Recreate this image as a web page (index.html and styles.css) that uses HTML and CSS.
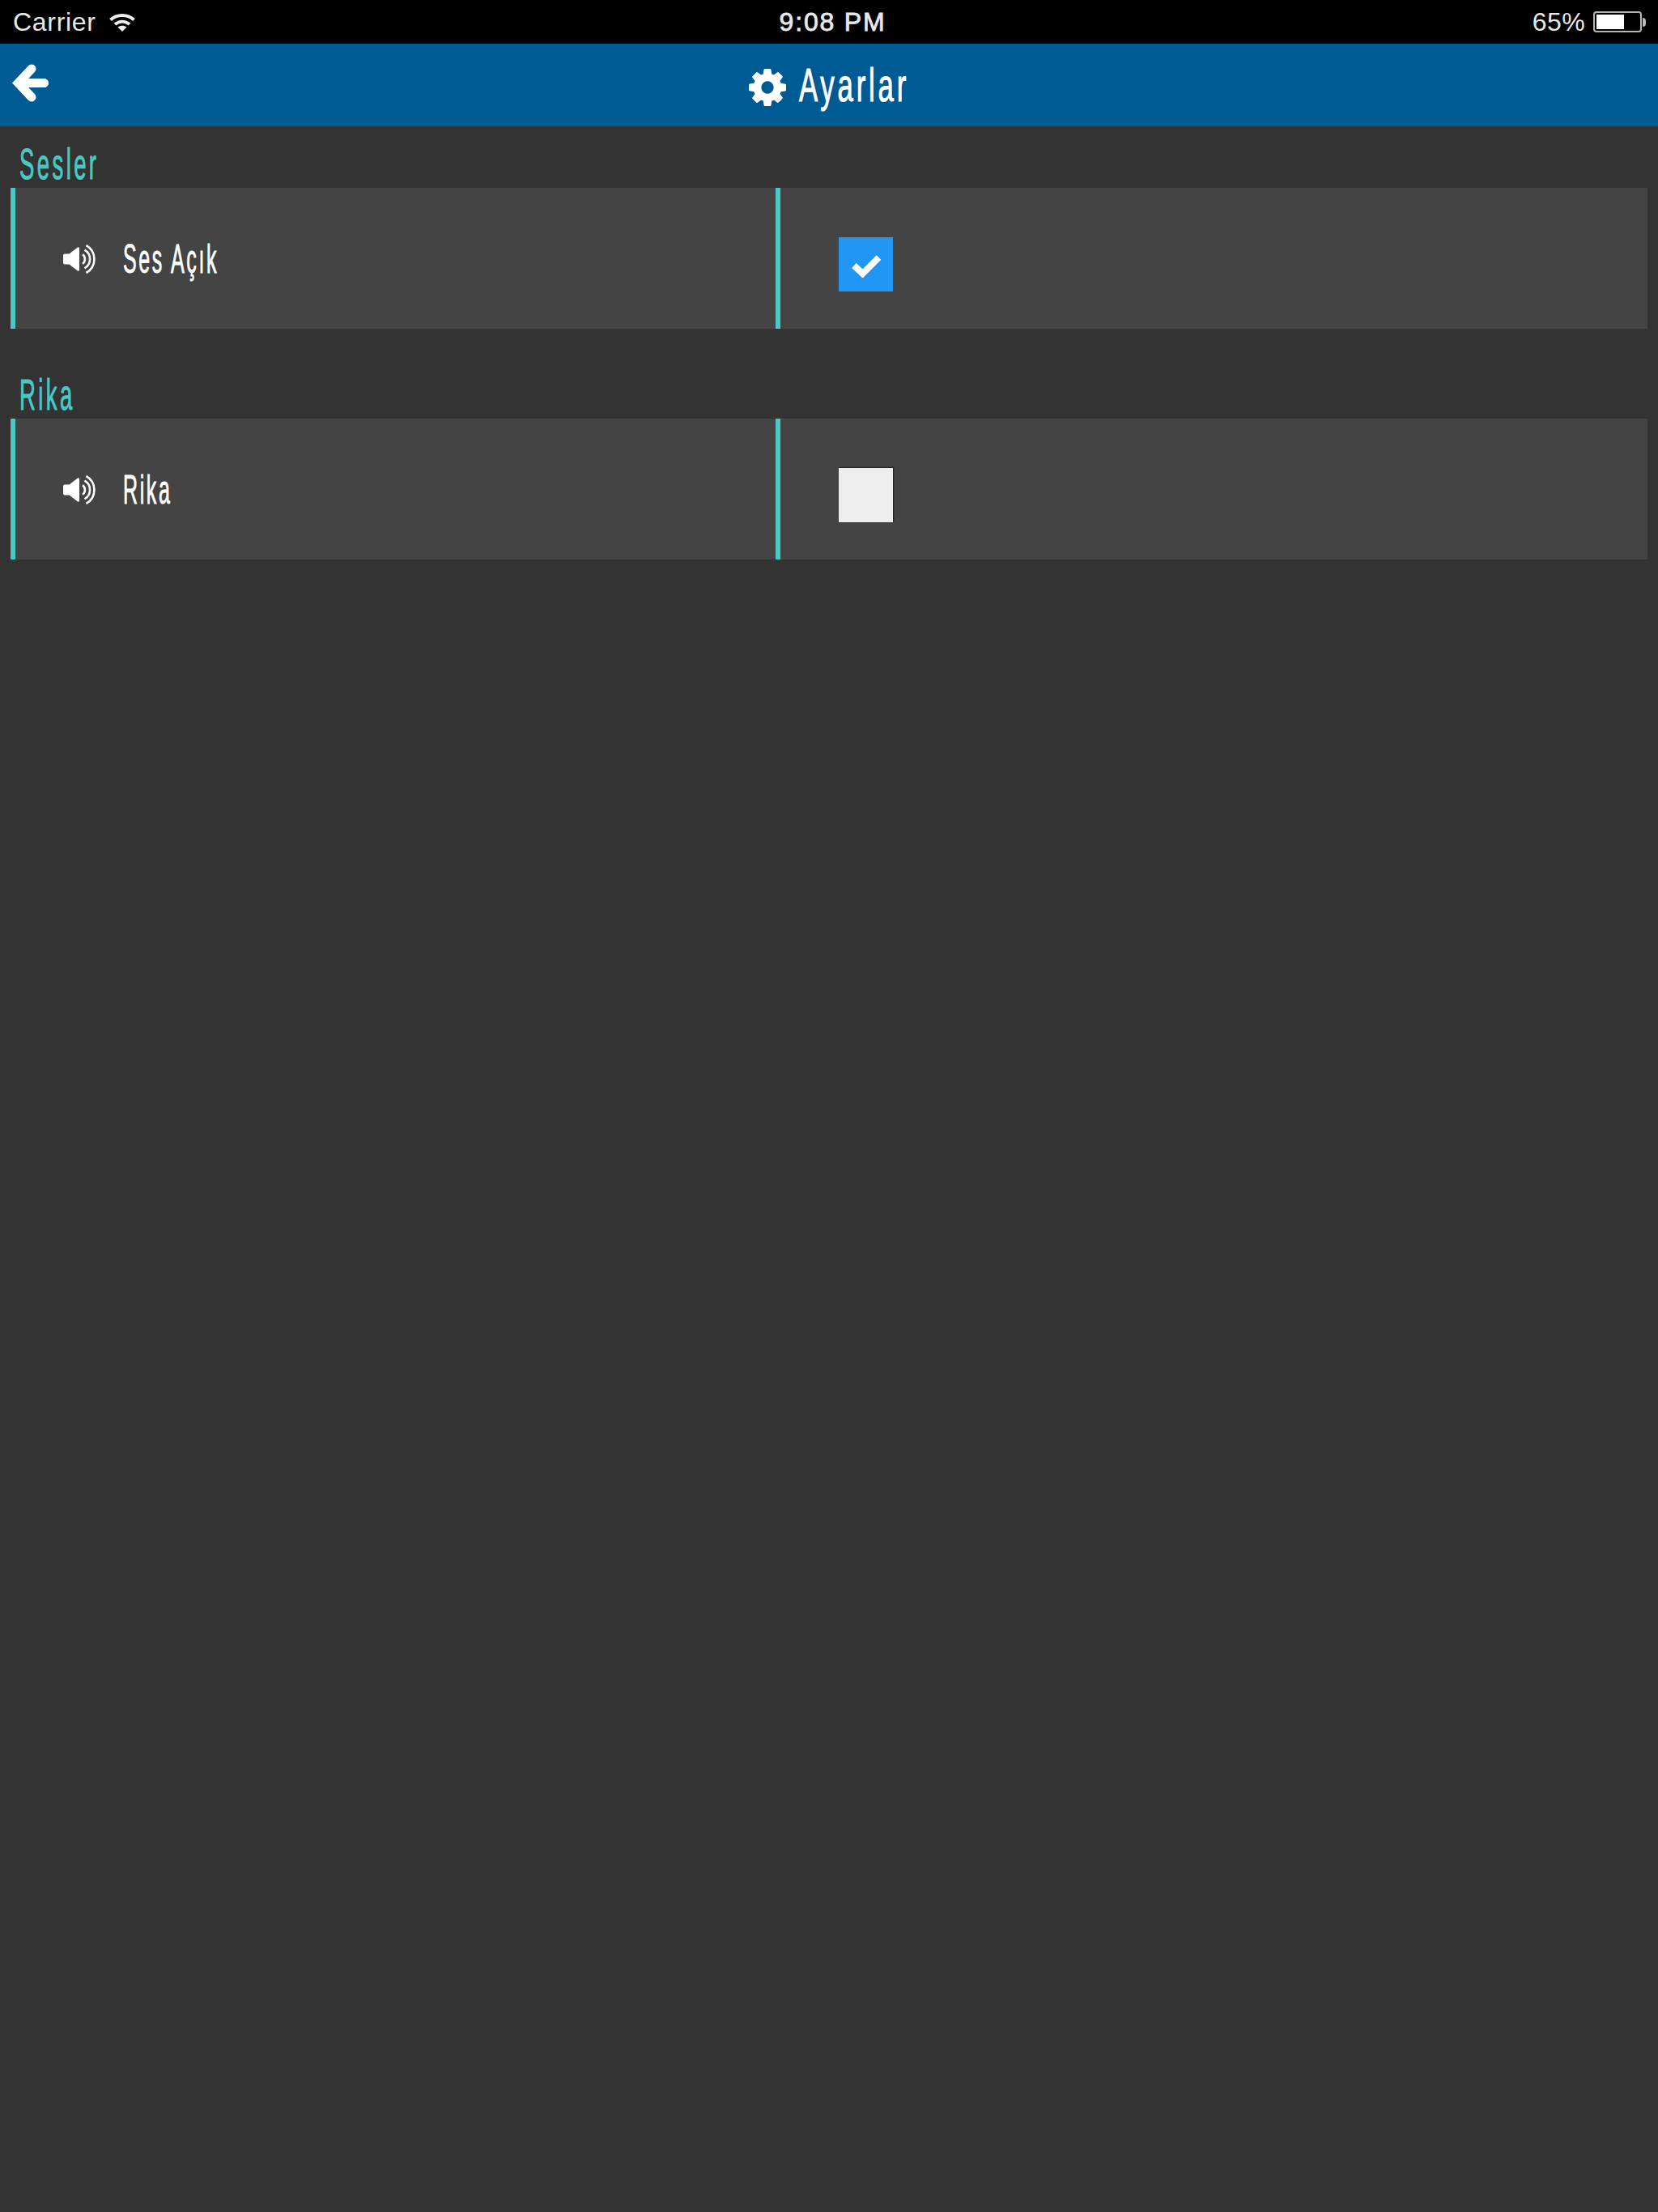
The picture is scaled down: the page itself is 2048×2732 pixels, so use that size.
FILE: index.html
```html
<!DOCTYPE html>
<html lang="en">
<head>
    <meta charset="UTF-8">
    <meta name="viewport" content="width=device-width, initial-scale=1.0">
    <title>Ayarlar</title>
    <link rel="stylesheet" href="styles.css">
</head>
<body>

<div class="status-bar">
    <div class="status-left">
        <span>Carrier</span>
        <svg class="wifi" viewBox="0 0 32 23">
            <path d="M1.500 8.500C9.500 1 22.500 1 30.500 8.500" />
            <path d="M7 14C12.500 9.500 19.500 9.500 25 14" />
            <path class="wifi-dot" d="M16 23l-5.500-5.500c3-2.500 8-2.500 11 0z" />
        </svg>
    </div>
    <div class="status-time">9:08 PM</div>
    <div class="status-right">
        <span>65%</span>
        <div class="battery"><div class="battery-level"></div></div>
        <div class="battery-nub"></div>
    </div>
</div>

<div class="navbar">
    <div class="back">
        <svg class="back-icon" viewBox="0 0 45 47"><path d="M24 6L7.500 23.500L24 41M8 23.500H39.500" /></svg>
    </div>
    <div class="nav-title">
        <svg class="gear" viewBox="128 128 1536 1536"><path d="M1152 896q0-106-75-181t-181-75-181 75-75 181 75 181 181 75 181-75 75-181zm512-109v222q0 12-8 23t-20 13l-185 28q-19 54-39 91 35 50 107 138 10 12 10 25t-9 23q-27 37-99 108t-94 71q-12 0-26-9l-138-108q-44 23-91 38-16 136-29 186-7 28-36 28h-222q-14 0-24.500-8.500t-11.500-21.500l-28-184q-49-16-90-37l-141 107q-10 9-25 9-14 0-25-11-126-114-165-168-7-10-7-23 0-12 8-23 15-21 51-66.500t54-70.500q-27-50-41-99l-183-27q-13-2-21-12.500t-8-23.500v-222q0-12 8-23t19-13l186-28q14-46 39-92-40-57-107-138-10-12-10-24 0-10 9-23 26-36 98.500-107.500t94.500-71.500q13 0 26 10l138 107q44-23 91-38 16-136 29-186 7-28 36-28h222q14 0 24.500 8.500t11.500 21.500l28 184q49 16 90 37l142-107q9-9 24-9 13 0 25 10 129 119 165 170 7 8 7 22 0 12-8 23-15 21-51 66.500t-54 70.500q26 50 41 98l183 28q13 2 21 12.500t8 23.500z"/></svg>
        <span class="nav-text">Ayarlar</span>
    </div>
</div>

<div class="content">
    <div class="section">
        <div class="section-title"><span>Sesler</span></div>
        <div class="row">
            <div class="cell cell-label">
                <svg class="sound" viewBox="0 0 43 36">
                    <path class="cone" d="M3 11.500H8.500L19 3.500Q21 2.500 21 5V31Q21 33.500 19 32.500L8.500 24.500H3Q1 24.500 1 22.500V13.500Q1 11.500 3 11.500Z" />
                    <path d="M25 12.300A7 7 0 0 1 25 23.700" />
                    <path d="M27.500 6.700A13 13 0 0 1 27.500 29.300" />
                    <path d="M29.500 1A19.500 19.500 0 0 1 29.500 35" />
                </svg>
                <span class="label-text">Ses Açık</span>
            </div>
            <div class="cell cell-check">
                <div class="checkbox checked">
                    <svg class="check-icon" viewBox="0 0 38 30"><path d="M4 15L14.500 25L34.500 5" /></svg>
                </div>
            </div>
        </div>
    </div>

    <div class="section">
        <div class="section-title"><span>Rika</span></div>
        <div class="row">
            <div class="cell cell-label">
                <svg class="sound" viewBox="0 0 43 36">
                    <path class="cone" d="M3 11.500H8.500L19 3.500Q21 2.500 21 5V31Q21 33.500 19 32.500L8.500 24.500H3Q1 24.500 1 22.500V13.500Q1 11.500 3 11.500Z" />
                    <path d="M25 12.300A7 7 0 0 1 25 23.700" />
                    <path d="M27.500 6.700A13 13 0 0 1 27.500 29.300" />
                    <path d="M29.500 1A19.500 19.500 0 0 1 29.500 35" />
                </svg>
                <span class="label-text">Rika</span>
            </div>
            <div class="cell cell-check">
                <div class="checkbox"></div>
            </div>
        </div>
    </div>
</div>

</body>
</html>
```

FILE: styles.css
```css
body {
    margin: 0;
    min-height: 2732px;
    background-color: #333;
    color: #fff;
    font-family: "Liberation Sans", sans-serif;
}

.status-bar {
    display: grid;
    grid-template-columns: 1fr auto 1fr;
    align-items: center;
    height: 54px;
    padding: 0 15px 0 16px;
    box-sizing: border-box;
    background-color: #000;
    font-size: 32px;
    color: #e8e8e8;
}

.status-left {
    display: flex;
    align-items: center;
    gap: 16px;
    letter-spacing: 0.7px;
}

.wifi {
    width: 32px;
    height: 23px;
    fill: none;
    stroke: #eee;
    stroke-width: 4;
}

.wifi-dot {
    fill: #eee;
    stroke: none;
}

.status-time {
    margin-left: 8px;
    letter-spacing: 1.8px;
    -webkit-text-stroke: 0.8px #e8e8e8;
}

.status-right {
    display: flex;
    align-items: center;
    justify-content: flex-end;
    letter-spacing: 0.4px;
}

.battery {
    width: 60px;
    height: 26px;
    margin-left: 10px;
    padding: 2px;
    box-sizing: border-box;
    border: 2px solid #b5b5b5;
    border-radius: 4px;
}

.battery-level {
    width: 65%;
    height: 100%;
    background-color: #fff;
}

.battery-nub {
    width: 4px;
    height: 11px;
    margin-left: 1px;
    border-radius: 0 4px 4px 0;
    background-color: #bbb;
}

.navbar {
    display: grid;
    grid-template-columns: 1fr auto 1fr;
    align-items: center;
    height: 102px;
    padding: 0 15px;
    box-sizing: border-box;
    background-color: #005a93;
}

.back-icon {
    display: block;
    width: 45px;
    height: 47px;
    margin-top: -6px;
    fill: none;
    stroke: #fff;
    stroke-width: 11;
    stroke-linecap: round;
}

.nav-title {
    display: flex;
    align-items: center;
    gap: 16px;
    font-size: 58px;
    line-height: 70px;
    letter-spacing: 6.3px;
}

.gear {
    width: 46px;
    height: 46px;
    margin-top: 6px;
    fill: #fff;
}

/* no narrow hand-drawn font here, so the labels are squeezed */
.nav-text {
    display: inline-block;
    margin-right: -90px;
    transform: scaleX(0.6);
    transform-origin: left;
    -webkit-text-stroke: 1px #fff;
}

.content {
    padding: 0 13px;
}

.section-title {
    height: 76px;
    padding: 18px 0 0 11px;
    box-sizing: border-box;
    color: #4ac9c4;
    font-size: 53px;
    line-height: 58px;
    letter-spacing: 6.5px;
}

.section-title span {
    display: inline-block;
    transform: scaleX(0.52);
    transform-origin: left;
    -webkit-text-stroke: 1px #4ac9c4;
}

.section + .section {
    margin-top: 35px;
}

.row {
    display: grid;
    grid-template-columns: 945px 1fr;
    height: 174px;
    background-color: #444;
}

.cell {
    display: flex;
    box-sizing: border-box;
    border-left: 6px solid #4ac9c4;
}

.cell-label {
    align-items: flex-start;
    gap: 32px;
    padding: 70px 0 0 58px;
    font-size: 50px;
    line-height: 36px;
    letter-spacing: 5.2px;
}

.label-text {
    display: inline-block;
    transform: scaleX(0.5);
    transform-origin: left;
    -webkit-text-stroke: 0.9px #fff;
}

.sound {
    width: 43px;
    height: 36px;
    flex: none;
    fill: none;
    stroke: #fff;
    stroke-width: 2.6;
}

.sound .cone {
    fill: #fff;
    stroke: none;
}

.cell-check {
    align-items: flex-start;
    padding: 61px 0 0 72px;
}

.checkbox {
    display: flex;
    align-items: center;
    justify-content: center;
    width: 67px;
    height: 67px;
    background-color: #eee;
    box-shadow: 1px -1px 1px #222;
}

.checkbox.checked {
    background-color: #2196f3;
    box-shadow: none;
}

.check-icon {
    width: 38px;
    height: 30px;
    margin-top: 2px;
    fill: none;
    stroke: #fff;
    stroke-width: 8;
}
```
